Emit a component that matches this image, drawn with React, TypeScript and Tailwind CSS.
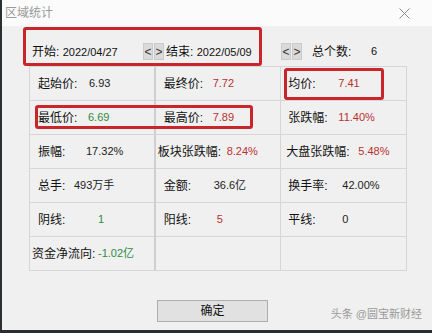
import React from 'react';

type Cell = {
  label: string;
  value?: string;
  color?: string;
  pl: number;
  lw: number;
};

const RED = 'text-[#b8302f]';
const GREEN = 'text-[#2f8a3c]';
const DARK = 'text-[#222]';

const rows: Cell[][] = [
  [
    { label: '起始价:', value: '6.93', color: DARK, pl: 8, lw: 51 },
    { label: '最终价:', value: '7.72', color: RED, pl: 8, lw: 49 },
    { label: '均价:', value: '7.41', color: RED, pl: 7, lw: 50 }
  ],
  [
    { label: '最低价:', value: '6.69', color: GREEN, pl: 8, lw: 50 },
    { label: '最高价:', value: '7.89', color: RED, pl: 8, lw: 49 },
    { label: '张跌幅:', value: '11.40%', color: RED, pl: 7, lw: 50 }
  ],
  [
    { label: '振幅:', value: '17.32%', color: DARK, pl: 8, lw: 48 },
    { label: '板块张跌幅:', value: '8.24%', color: RED, pl: 2, lw: 69 },
    { label: '大盘张跌幅:', value: '5.48%', color: RED, pl: 5, lw: 72 }
  ],
  [
    { label: '总手:', value: '493万手', color: DARK, pl: 8, lw: 36 },
    { label: '金额:', value: '36.6亿', color: DARK, pl: 8, lw: 50 },
    { label: '换手率:', value: '42.00%', color: DARK, pl: 7, lw: 54 }
  ],
  [
    { label: '阴线:', value: '1', color: GREEN, pl: 8, lw: 60 },
    { label: '阳线:', value: '5', color: RED, pl: 8, lw: 53 },
    { label: '平线:', value: '0', color: DARK, pl: 7, lw: 54 }
  ],
  [
    { label: '资金净流向:', value: '-1.02亿', color: GREEN, pl: 2, lw: 66 },
    { label: '', pl: 8, lw: 0 },
    { label: '', pl: 7, lw: 0 }
  ]
];

const NavButtons: React.FC = () => (
  <div className="flex gap-[1px]">
    <span className="w-[10px] h-[17px] bg-[#dadada] border border-[#cacaca] flex items-center justify-center text-[12px] leading-none text-[#333]">
      &lt;
    </span>
    <span className="w-[10px] h-[17px] bg-[#dadada] border border-[#cacaca] flex items-center justify-center text-[12px] leading-none text-[#333]">
      &gt;
    </span>
  </div>
);

export default function App() {
  return (
    <div
      className="relative w-[432px] h-[333px] overflow-hidden bg-[#f0f0f0] border-l-2 border-b-[3px] border-[#2a2f33] flex flex-col text-[12px] text-[#111]"
      style={{ fontFamily: '"Liberation Sans", "Noto Sans CJK SC", sans-serif' }}
    >
      {/* TITLE BAR */}
      <div className="h-[26px] bg-[#fbfbfb] flex items-center justify-between pl-[3px] pr-[22px]">
        <span className="text-[12px] text-[#9a9a9a]">区域统计</span>
        <svg width="11" height="11" viewBox="0 0 11 11" className="stroke-[#8a8a8a]">
          <path d="M0.5 0.5 L10.5 10.5 M10.5 0.5 L0.5 10.5" strokeWidth="1" fill="none" />
        </svg>
      </div>

      {/* DATE RANGE */}
      <div className="mt-[17px] h-[17px] flex items-center pl-[30px] leading-none whitespace-nowrap">
        <span className="w-[111px]">
          开始: <span className="text-[11px]">2022/04/27</span>
        </span>
        <NavButtons />
        <span className="ml-[2px] w-[115px]">
          结束: <span className="text-[11px]">2022/05/09</span>
        </span>
        <NavButtons />
        <span className="ml-[10px] w-[59px]">总个数:</span>
        <span className="text-[11px]">6</span>
      </div>

      {/* GRID */}
      <div className="mt-[6px] ml-[27px] w-[378px] grid grid-cols-3 border-l border-t border-[#d6d6d6]">
        {rows.map((row, ri) =>
          row.map((c, ci) => (
            <div
              key={`${ri}-${ci}`}
              className={`h-[34px] flex items-center whitespace-nowrap border-b border-[#d6d6d6] ${
                ci === 0 ? 'border-r-2 border-r-[#cfcfcf]' : 'border-r'
              }`}
              style={{ paddingLeft: c.pl }}
            >
              {c.label && (
                <>
                  <span className="shrink-0" style={{ width: c.lw }}>
                    {c.label}
                  </span>
                  <span className={`text-[11px] ${c.color}`}>{c.value}</span>
                </>
              )}
            </div>
          ))
        )}
      </div>

      {/* OK BUTTON */}
      <div className="mt-[29px] ml-[155px] w-[111px] h-[22px] bg-[#e1e1e1] border border-[#adadad] flex items-center justify-center text-[12px]">
        确定
      </div>

      {/* WATERMARK */}
      <span className="absolute right-[10px] bottom-[8px] text-[11px] text-[#9a9a9a]">
        头条 @圆宝新财经
      </span>

      {/* RED ANNOTATIONS */}
      <div className="absolute left-[21px] top-[27px] w-[239px] h-[39px] border-[3px] border-[#c9262c] rounded-[3px]" />
      <div className="absolute left-[282px] top-[68px] w-[100px] h-[32px] border-[3px] border-[#c9262c] rounded-[3px]" />
      <div className="absolute left-[33px] top-[105px] w-[218px] h-[24px] border-[3px] border-[#c9262c] rounded-[3px]" />
    </div>
  );
}
